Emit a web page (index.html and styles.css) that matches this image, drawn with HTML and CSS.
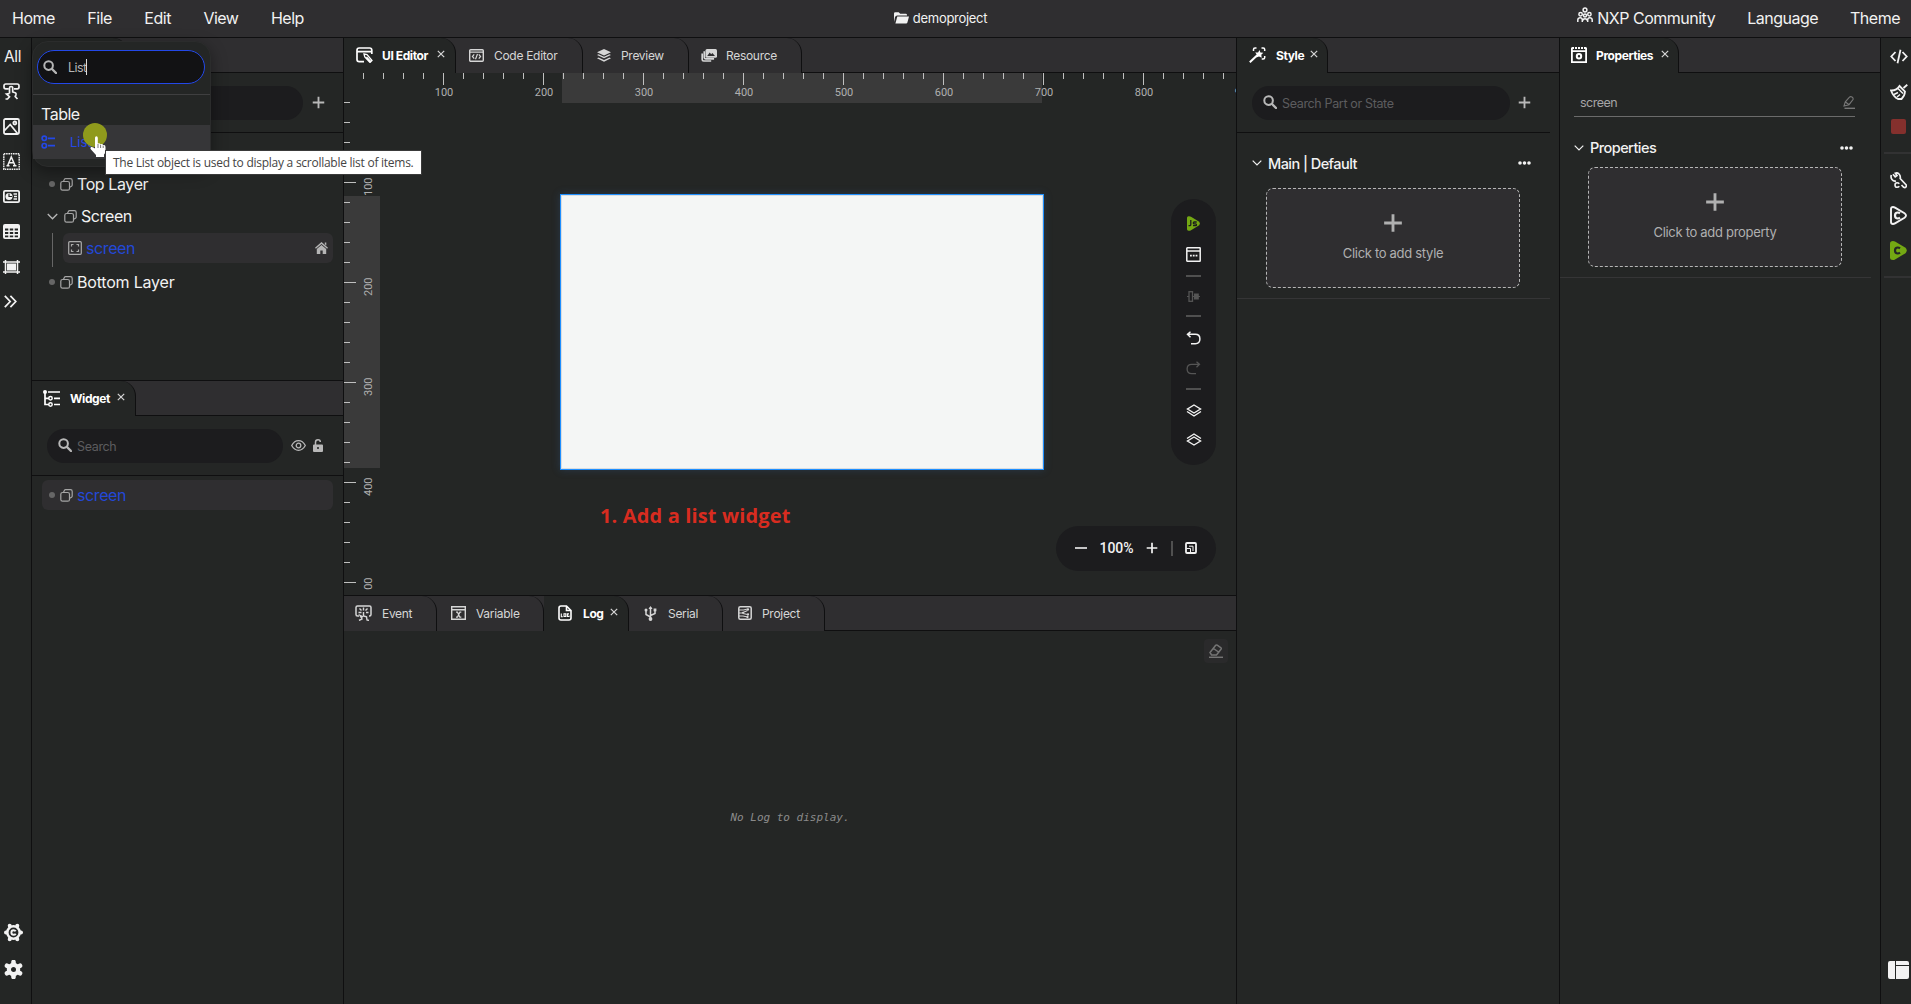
FILE: index.html
```html
<!DOCTYPE html>
<html lang="en">
<head>
    <meta charset="UTF-8">
    <meta name="viewport" content="width=device-width, initial-scale=1.0">
    <title>demoproject</title>
    <link rel="stylesheet" href="styles.css">
</head>
<body>
    <!-- Shared icons -->
    <svg class="sprite">
        <symbol id="search" viewBox="0 0 14 14"><circle cx="5.6" cy="5.6" r="4.3" fill="none" stroke="currentColor" stroke-width="2"/><path d="M9 9l4 4" stroke="currentColor" stroke-width="2.4" stroke-linecap="round"/></symbol>
        <symbol id="plus" viewBox="0 0 14 14"><path d="M7 .8v12.4M.8 7h12.4" stroke="currentColor" stroke-width="2"/></symbol>
        <symbol id="close" viewBox="0 0 8 8"><path d="M.8 .8l6.4 6.4M7.2 .8L.8 7.2" stroke="currentColor" stroke-width="1.2"/></symbol>
        <symbol id="chevron" viewBox="0 0 10 6"><path d="M.7 .7L5 5 9.3 .7" fill="none" stroke="currentColor" stroke-width="1.2"/></symbol>
        <symbol id="dots" viewBox="0 0 13 4"><path d="M2 2h.01M6.5 2h.01M11 2h.01" stroke="currentColor" stroke-width="3.6" stroke-linecap="round"/></symbol>
        <symbol id="layer" viewBox="0 0 13 13"><g fill="none" stroke="currentColor" stroke-width="1.2"><rect x=".8" y="3.5" width="8.7" height="8.7" rx="1.8"/><path d="M3.5 3.3l1-2q.3-.6 1-.6h5q1.7 0 1.7 1.7v4.6q0 .8-.7 1.200l-1.800 1"/></g></symbol>
    </svg>

    <div class="menubar">
        <div class="menu">
            <span>Home</span>
            <span>File</span>
            <span>Edit</span>
            <span>View</span>
            <span>Help</span>
        </div>
        <div class="project-name">
            <svg width="15" height="12" viewBox="0 0 15 12"><path d="M0 10V1.500Q0 .2 1.300 .2h3.400l1.500 1.500h5.500q1.300 0 1.300 1.300v.6H3.200Q1.500 3.600 1 5.200zM3.300 4.600H15l-1.600 5.900q-.3 1-1.300 1H1.400z" fill="currentColor"/></svg>
            <span>demoproject</span>
        </div>
        <div class="menu menu-right">
            <span class="community">
                <svg width="16" height="17" viewBox="0 0 16 17"><g fill="none" stroke="currentColor" stroke-width="1.500"><circle cx="8" cy="3" r="1.900"/><circle cx="3.600" cy="7.200" r="1.700"/><circle cx="12.400" cy="7.200" r="1.700"/><circle cx="8" cy="8.600" r="1.500"/><path d="M.8 15v-2.200Q1 10.800 3.300 10.800q1.800 0 2 2V15M10.700 15v-2.200q.2-2 2-2 2.300 0 2.500 2V15M5.500 14q.3-2.200 2.500-2.200t2.500 2.200"/></g></svg>
                NXP Community
            </span>
            <span>Language</span>
            <span>Theme</span>
        </div>
    </div>

    <div class="workspace">
        <!-- Widget categories -->
        <div class="rail rail-left">
            <div class="rail-item all">All</div>
            <div class="rail-item"><svg width="17" height="17" viewBox="0 0 17 17"><path d="M5.500 5.800H2.800Q1 5.800 1 4V2.800Q1 1 2.800 1h11.400Q16 1 16 2.800V4q0 1.800-1.800 1.800H11M6.500 10.500V5q0-1.500 1.600-1.500T9.700 5v4l2.500.8q1.200.5.800 1.800l-.8 2 2.300 2.400M6.500 10.500l-3 .5 3 2.700L4.500 16H2.500" fill="none" stroke="currentColor" stroke-width="1.700"/></svg></div>
            <div class="rail-item"><svg width="17" height="17" viewBox="0 0 17 17"><g fill="none" stroke="currentColor" stroke-width="1.800"><rect x="1" y="1" width="15" height="15" rx="1.500"/><circle cx="11.800" cy="5" r="1.500"/><path d="M1.500 12.500L7.200 6.500l7.300 9"/></g></svg></div>
            <div class="rail-item"><svg width="17" height="17" viewBox="0 0 17 17"><rect x=".8" y=".8" width="15.400" height="15.400" fill="none" stroke="currentColor" stroke-width="1.400" stroke-dasharray="1.600 .7"/><path d="M4.700 12.500L8.300 4l3.700 8.500M6 9.800h5M3.500 12.700h3M10 12.700h3.500" fill="none" stroke="currentColor" stroke-width="1.500"/></svg></div>
            <div class="rail-item"><svg width="17" height="13" viewBox="0 0 17 13"><rect x=".9" y=".9" width="15.200" height="11.200" rx="1.200" fill="none" stroke="currentColor" stroke-width="1.800"/><circle cx="6" cy="6.500" r="3.500" fill="currentColor"/><path d="M6 3.500v3h3" fill="none" stroke="#242625" stroke-width="1.200"/><path d="M10.500 4h3.500M11 6.500h3M10.500 9h3.500" stroke="currentColor" stroke-width="1.400"/></svg></div>
            <div class="rail-item"><svg width="17" height="15" viewBox="0 0 17 15"><rect width="17" height="15" rx="2" fill="currentColor"/><path d="M2 4.500h3.300v2H2zM6.800 4.500h3.400v2H6.800zM11.700 4.500H15v2h-3.300zM2 8h3.300v2H2zM6.800 8h3.400v2H6.800zM11.700 8H15v2h-3.300zM2 11.400h3.300v1.800H2zM6.800 11.400h3.400v1.800H6.800zM11.700 11.400H15v1.800h-3.300z" fill="#242625"/></svg></div>
            <div class="rail-item"><svg width="17" height="14" viewBox="0 0 17 14"><rect x="4" y="3.500" width="9" height="7" fill="currentColor"/><path d="M0 2h17M0 12h17M2.500 0v14M14.500 0v14" stroke="currentColor" stroke-width="1.500"/></svg></div>
            <div class="rail-item more"><svg width="13" height="13" viewBox="0 0 13 13"><path d="M.8 .8l5.400 5.700-5.400 5.700M6.400 .8l5.400 5.700-5.400 5.700" fill="none" stroke="currentColor" stroke-width="1.700"/></svg></div>
            <div class="rail-bottom">
                <svg width="19" height="19" viewBox="0 0 19 19"><circle cx="9.500" cy="9.500" r="6.200" fill="none" stroke="currentColor" stroke-width="2.600"/><path d="M5.700 2.700h.01M13.300 2.700h.01M2 9.500h.01M17 9.500h.01M5.700 16.300h.01M13.300 16.300h.01" stroke="currentColor" stroke-width="4" stroke-linecap="round"/><path d="M11.700 8.300Q11 7.200 9.600 7.200q-2.200 0-2.200 2.300t2.200 2.300q1.400 0 2.100-1.100" fill="none" stroke="currentColor" stroke-width="1.900"/></svg>
                <svg width="19" height="19" viewBox="0 0 19 19"><circle cx="9.500" cy="9.500" r="4.600" fill="none" stroke="currentColor" stroke-width="4.200"/><path d="M9.500 2v2M9.500 15v2M3 5.750l1.700 1M14.300 12.250l1.700 1M3 13.250l1.700-1M14.300 6.750l1.700-1" stroke="currentColor" stroke-width="4.600" stroke-linecap="round"/></svg>
            </div>
        </div>

        <!-- Screen tree and widget tree -->
        <div class="left-panel">
            <div class="screens">
                <div class="tabs"><div class="tab active tab-screens"></div><div class="tabs-rest"></div></div>
                <div class="search-row">
                    <div class="search-box"></div>
                    <svg class="icon add" width="13" height="13"><use href="#plus"/></svg>
                </div>
                <div class="tree">
                    <div class="node"><i class="bullet"></i><svg class="icon" width="13" height="13"><use href="#layer"/></svg>Top Layer</div>
                    <div class="node node-open"><svg class="arrow" width="11" height="7"><use href="#chevron"/></svg><svg class="icon" width="13" height="13"><use href="#layer"/></svg>Screen</div>
                    <div class="children">
                        <div class="node selected">
                            <svg width="14" height="14" viewBox="0 0 14 14"><rect x=".7" y=".7" width="12.600" height="12.600" rx="1" fill="none" stroke="#aaa" stroke-width="1.200"/><path d="M3.500 5.500v-2h2M8.500 3.500h2v2M10.500 8.500v2h-2M5.500 10.500h-2v-2" fill="none" stroke="#aaa" stroke-width="1.200"/></svg>
                            screen
                            <svg class="home" width="13" height="12" viewBox="0 0 13 12"><path d="M6.500 0L13 5.800l-.9 1L6.500 1.900 .9 6.800 0 5.800zM6.500 3l4.700 4.100V12H7.700V8.500H5.300V12H1.800V7.100zM9.800 .6h1.500v3l-1.500-1.400z" fill="#b5b5b5"/></svg>
                        </div>
                    </div>
                    <div class="node"><i class="bullet"></i><svg class="icon" width="13" height="13"><use href="#layer"/></svg><span class="wide">Bottom Layer</span></div>
                </div>
            </div>

            <div class="widgets">
                <div class="tabs">
                    <div class="tab active tab-widget">
                        <svg width="17" height="17" viewBox="0 0 17 17"><path d="M2 3v11.500h4M2 8.300h4M5 2h12M11 8.300h6M11 14.500h6" fill="none" stroke="currentColor" stroke-width="1.700"/><circle cx="2" cy="2" r="2" fill="currentColor"/><circle cx="7.500" cy="8.300" r="1.700" fill="none" stroke="currentColor" stroke-width="1.500"/><circle cx="7.500" cy="14.500" r="1.700" fill="none" stroke="currentColor" stroke-width="1.500"/></svg>
                        <span>Widget</span>
                        <svg class="close" width="8" height="8"><use href="#close"/></svg>
                    </div>
                    <div class="tabs-rest"></div>
                </div>
                <div class="search-row">
                    <div class="search-box search-widget"><svg width="14" height="14"><use href="#search"/></svg>Search</div>
                    <svg class="icon" width="15" height="11" viewBox="0 0 15 11"><path d="M.7 5.500Q3.300 .7 7.500 .7t6.800 4.800q-2.600 4.800-6.800 4.800T.7 5.500z" fill="none" stroke="currentColor" stroke-width="1.300"/><circle cx="7.500" cy="5.500" r="2.300" fill="none" stroke="currentColor" stroke-width="1.300"/></svg>
                    <svg class="icon lock" width="10" height="13" viewBox="0 0 10 13"><path d="M2.500 6V3.300Q2.500 .8 5 .8q2.300 0 2.300 2.200" fill="none" stroke="currentColor" stroke-width="1.500"/><path d="M1 5.500h8q1 0 1 1V12q0 1-1 1H1q-1 0-1-1V6.500q0-1 1-1zM4.200 8v2h1.600V8z" fill="currentColor"/></svg>
                </div>
                <div class="tree">
                    <div class="node selected"><i class="bullet"></i><svg class="icon" width="13" height="13"><use href="#layer"/></svg>screen</div>
                </div>
            </div>
        </div>

        <!-- Editor and log -->
        <div class="center">
            <div class="tabs">
                <div class="tab active tab-ui">
                    <svg width="17" height="16" viewBox="0 0 17 16"><path d="M15.800 7V3.200Q15.800 1 13.600 1H3.200Q1 1 1 3.200v9.300q0 2.200 2.200 2.200H8M1 4.600h14.800" fill="none" stroke="currentColor" stroke-width="1.700"/><path d="M8 7l3 .5 5 6-2 2-5.200-5.500zM10.500 10l4 4.300" fill="none" stroke="currentColor" stroke-width="1.300"/></svg>
                    <span>UI Editor</span>
                    <svg class="close" width="8" height="8"><use href="#close"/></svg>
                </div>
                <div class="tab tab-code">
                    <svg width="15" height="13" viewBox="0 0 15 13"><rect x=".7" y=".7" width="13.600" height="11.600" rx="1" fill="none" stroke="currentColor" stroke-width="1.400"/><path d="M.7 3.200h13.600M5.200 5.300L3.400 7.500l1.800 2.200M9.800 5.300l1.800 2.200-1.800 2.200M8.500 5L6.500 10.200" fill="none" stroke="currentColor" stroke-width="1.200"/></svg>
                    <span>Code Editor</span>
                </div>
                <div class="tab tab-preview">
                    <svg width="14" height="13" viewBox="0 0 14 13"><path d="M7 0l7 3.200-7 3.200-7-3.200zM1.500 5.300L7 7.700l5.500-2.400L14 6 7 9.200 0 6zM1.500 8.500L7 11l5.500-2.500 1.500.7L7 12.700 0 9.200z" fill="currentColor"/></svg>
                    <span>Preview</span>
                </div>
                <div class="tab tab-resource">
                    <svg width="16" height="13" viewBox="0 0 16 13"><path d="M6 0h8.500Q16 0 16 1.500v5.700q0 1.500-1.500 1.500H6q-1.500 0-1.500-1.500V1.500Q4.500 0 6 0z" fill="currentColor"/><path d="M6.200 7l2.500-3.500 1.500 1.800 1.200-1.200L14 7z" fill="#2f2e30"/><path d="M3.300 2.300v6.200q0 1.300 1.300 1.300h8.500M1.200 4.500v6q0 1.500 1.500 1.500h7.500" fill="none" stroke="currentColor" stroke-width="1.700"/></svg>
                    <span>Resource</span>
                </div>
                <div class="tabs-rest"></div>
            </div>

            <div class="stage">
                <div class="ruler-x">
                    <span>100</span><span>200</span><span>300</span><span>400</span><span>500</span><span>600</span><span>700</span><span>800</span><span>900</span>
                </div>
                <div class="ruler-y">
                    <span>100</span><span>200</span><span>300</span><span>400</span><span>500</span>
                </div>
                <div class="screen"></div>
                <div class="note">1. Add a list widget</div>

                <div class="tools">
                    <svg width="15" height="15" viewBox="0 0 15 15"><path d="M1 1.800Q1 .4 2.500 .2 4 0 5 .8l8.200 5Q14.700 7.500 13.200 9.200L5 14.200q-1 .8-2.500.6Q1 14.600 1 13.200z" fill="#74a813"/><path d="M4.800 4v4.400q0 1.200-1 1.200H2.500M10.700 6H8.300q-1 0-1 .9t1 .9h1.200q1 0 1 .9t-1 .9H7" fill="none" stroke="#1c1c1e" stroke-width="1.300"/></svg>
                    <svg width="15" height="15" viewBox="0 0 15 15"><rect x=".8" y=".8" width="13.400" height="13.400" rx=".5" fill="none" stroke="currentColor" stroke-width="1.500"/><path d="M1 4h13" stroke="currentColor" stroke-width="1.500"/><path d="M4 8.700h8" stroke="currentColor" stroke-width="1.700" stroke-dasharray="1.800 1"/></svg>
                    <i></i>
                    <svg class="off" width="13" height="11" viewBox="0 0 13 11"><path d="M0 5.500h2M5.500 5.500H13" stroke="currentColor"/><rect x="2" y=".7" width="3.500" height="9.600" fill="none" stroke="currentColor" stroke-width="1.300"/><rect x="7" y="2.500" width="4.800" height="6" fill="currentColor"/></svg>
                    <i></i>
                    <svg width="15" height="14" viewBox="0 0 15 14"><path d="M4.500 .7L1.500 3.300l3 2.900M1.500 3.300H9.300q4.600 0 4.600 4.700T9.300 12.700H5" fill="none" stroke="currentColor" stroke-width="1.500"/></svg>
                    <svg class="off" width="15" height="14" viewBox="0 0 15 14"><path d="M10.500 .7l3 2.600-3 2.900M13.500 3.300H5.700Q1.100 3.300 1.100 8t4.600 4.700H10" fill="none" stroke="currentColor" stroke-width="1.300"/></svg>
                    <i></i>
                    <svg width="16" height="13" viewBox="0 0 16 13"><path d="M8 1l6.500 4L8 9 1.500 5zM1 7.500L8 12l7-4.500" fill="none" stroke="currentColor" stroke-width="1.400"/></svg>
                    <svg width="16" height="13" viewBox="0 0 16 13"><path d="M8 4l6.500 4L8 12 1.500 8zM1 5.500L8 1l7 4.500" fill="none" stroke="currentColor" stroke-width="1.400"/></svg>
                </div>

                <div class="zoom">
                    <svg width="12" height="12" viewBox="0 0 12 12"><path d="M0 6h12" stroke="currentColor" stroke-width="1.600"/></svg>
                    <span>100%</span>
                    <svg width="12" height="12"><use href="#plus"/></svg>
                    <i></i>
                    <svg width="12" height="12" viewBox="0 0 12 12"><rect x="1" y="1" width="10" height="10" rx="1" fill="none" stroke="currentColor" stroke-width="1.800"/><path d="M4 4.200h4V9M1.500 6.500h4v4" fill="none" stroke="currentColor"/></svg>
                </div>
            </div>

            <div class="log">
                <div class="tabs">
                    <div class="tab tab-event">
                        <svg width="17" height="16" viewBox="0 0 17 16"><path d="M4 11H2.500Q1 11 1 9.500v-7Q1 1 2.500 1h12Q16 1 16 2.500v7q0 1.500-1.500 1.500H14" fill="none" stroke="currentColor" stroke-width="1.500"/><path d="M8.500 2.500v3M4.500 3.500l2 2M12.500 3.500l-2 2M3.500 7.500h3M13.500 7.500H11M8.500 7v4l3 .8.5 3.200 2 .5M8 12l-3-1.500 2 3.500-3 1.500" fill="none" stroke="currentColor" stroke-width="1.400"/></svg>
                        <span>Event</span>
                    </div>
                    <div class="tab tab-variable">
                        <svg width="15" height="14" viewBox="0 0 15 14"><path d="M.7 .7h13.600v12.600H.7zM.7 3.700h13.600" fill="none" stroke="currentColor" stroke-width="1.400"/><path d="M5 6.200h1.500l2.300 5h1.500M10.300 6.200H8.900l-2.500 5H5" fill="none" stroke="currentColor" stroke-width="1.200"/></svg>
                        <span>Variable</span>
                    </div>
                    <div class="tab active tab-log">
                        <svg width="14" height="16" viewBox="0 0 14 16"><path d="M1 13V3q0-2 2-2h5.500L13 5.500V13q0 2-2 2H3q-2 0-2-2zM8.500 1v4.500H13" fill="none" stroke="currentColor" stroke-width="1.600"/><path d="M3.300 8.500v3.200h1.500M6 8.800h1.800v2.700H6zM11 8.900H9.400v2.600H11v-1" fill="none" stroke="currentColor" stroke-width="1.100"/></svg>
                        <span>Log</span>
                        <svg class="close" width="8" height="8"><use href="#close"/></svg>
                    </div>
                    <div class="tab tab-serial">
                        <svg width="13" height="15" viewBox="0 0 13 15"><path d="M6.500 1v12M6.500 11L2 8.500V4.500M6.500 9.500L11 7.500V4" fill="none" stroke="currentColor" stroke-width="1.500"/><path d="M4.500 3l2-3 2 3z" fill="currentColor"/><circle cx="6.500" cy="13" r="1.900" fill="currentColor"/><circle cx="2" cy="4" r="1.500" fill="currentColor"/><path d="M9.600 2.500h2.800v2.800H9.600z" fill="currentColor"/></svg>
                        <span>Serial</span>
                    </div>
                    <div class="tab tab-project">
                        <svg width="14" height="14" viewBox="0 0 14 14"><rect x=".8" y=".8" width="12.400" height="12.400" rx="1.500" fill="none" stroke="currentColor" stroke-width="1.500"/><path d="M1 4h4.500L9.500 3M1 7h3l5.500-2.500M1 10h4l4.500 1M5 7.500l4.500 1" fill="none" stroke="currentColor" stroke-width="1.200"/><path d="M10 3.500h.01M10 8.500h.01M5 6.800h.01M9.500 11h.01" stroke="currentColor" stroke-width="2.300" stroke-linecap="round"/></svg>
                        <span>Project</span>
                    </div>
                    <div class="tabs-rest"></div>
                </div>
                <div class="log-body">
                    <div class="clear"><svg width="14" height="14" viewBox="0 0 14 14"><path d="M0 13.300h14" stroke="currentColor" stroke-width="1.500"/><path d="M4.500 11H2.500L1 8.500l5.500-7Q7.200 .6 8.200 1.200l3.500 2.300q1 .7.300 1.700L7.500 11zM4.500 4.500l5 3.500" fill="none" stroke="currentColor" stroke-width="1.500"/></svg></div>
                    <p>No Log to display.</p>
                </div>
            </div>
        </div>

        <!-- Style -->
        <div class="side style-panel">
            <div class="tabs">
                <div class="tab active tab-style">
                    <svg width="17" height="16" viewBox="0 0 17 16"><path d="M.8 15.300L9 7.500" stroke="currentColor" stroke-width="2"/><path d="M10.500 3l.9 2.500 2.900.2-2 2 .4 3-2.700-1.200-2.800 1 .8-2.800-1.800-2.200 2.900-.1z" fill="currentColor"/><path d="M4.500 4V2.500Q4.500 1 6 1h1.500M12.500 1h1.700q1.500 0 1.500 1.500V4M15.700 9v1.500q0 1.500-1.500 1.500h-1.500" fill="none" stroke="currentColor" stroke-width="1.500"/></svg>
                    <span>Style</span>
                    <svg class="close" width="8" height="8"><use href="#close"/></svg>
                </div>
                <div class="tabs-rest"></div>
            </div>
            <div class="side-content">
                <div class="search-row">
                    <div class="search-box search-style"><svg width="14" height="14"><use href="#search"/></svg>Search Part or State</div>
                    <svg class="icon" width="13" height="13"><use href="#plus"/></svg>
                </div>
                <div class="section">
                    <div class="section-title">
                        <svg width="10" height="6"><use href="#chevron"/></svg>
                        <h2>Main | Default</h2>
                        <svg class="dots" width="13" height="4"><use href="#dots"/></svg>
                    </div>
                    <div class="add-box">
                        <svg width="20" height="20"><use href="#plus"/></svg>
                        <p>Click to add style</p>
                    </div>
                </div>
            </div>
        </div>

        <!-- Properties -->
        <div class="side prop-panel">
            <div class="tabs">
                <div class="tab active tab-prop">
                    <svg width="16" height="16" viewBox="0 0 16 16"><path d="M.9 .5v14.600h14.200V.5M1 4.200h14" fill="none" stroke="currentColor" stroke-width="1.800"/><path d="M1 1h14" stroke="currentColor" stroke-width="1.800" stroke-dasharray="2 1"/><circle cx="8" cy="9.300" r="2.200" fill="none" stroke="currentColor" stroke-width="2"/></svg>
                    <span>Properties</span>
                    <svg class="close" width="8" height="8"><use href="#close"/></svg>
                </div>
                <div class="tabs-rest"></div>
            </div>
            <div class="side-content">
                <div class="name-row">
                    <span>screen</span>
                    <svg width="12" height="13" viewBox="0 0 12 13"><path d="M1.500 12.300H12" stroke="currentColor" stroke-width="1.400"/><path d="M1 10l1.300-4.200L6.500 1.200q1-1 2.500-.2t1 2.500L6 8.700zM2.500 6l3.300 2.500" fill="none" stroke="currentColor" stroke-width="1.100"/></svg>
                </div>
                <div class="section">
                    <div class="section-title">
                        <svg width="10" height="6"><use href="#chevron"/></svg>
                        <h2>Properties</h2>
                        <svg class="dots" width="13" height="4"><use href="#dots"/></svg>
                    </div>
                    <div class="add-box">
                        <svg width="20" height="20"><use href="#plus"/></svg>
                        <p>Click to add property</p>
                    </div>
                </div>
            </div>
        </div>

        <!-- Run and build -->
        <div class="rail rail-right">
            <div class="rail-item"><svg width="18" height="15" viewBox="0 0 18 15"><path d="M5.500 3L1.300 7.500l4.200 4.500M12.500 3l4.200 4.500-4.200 4.500M10.500 .8L7.500 14.200" fill="none" stroke="currentColor" stroke-width="1.800"/></svg></div>
            <div class="rail-item"><svg width="18" height="16" viewBox="0 0 18 16"><path d="M17.300 .7L13.500 4M9.500 2l5.500 5.500q-.3 4.500-3.500 7.500H8Q3.500 13 1 6.500q5.500.3 8.500-4.500z" fill="none" stroke="currentColor" stroke-width="1.800"/><path d="M4 10.500l4-2M7 13l3-2.500M8 4.500l5 5" stroke="currentColor" stroke-width="1.500"/></svg></div>
            <div class="rail-item stop"><i></i></div>
            <hr>
            <div class="rail-item"><svg width="17" height="17" viewBox="0 0 17 17"><path d="M3 2.200l2.200 2.600L7 3.500 5.300 1.200Q7.300 .3 9 2t1.200 4.500l6 6.500q.6 1-.3 2t-2.200.3L11.500 13M6 9Q3.500 9.500 2 7.500T1.300 3" fill="none" stroke="currentColor" stroke-width="1.700"/><path d="M9.300 11.700Q8.500 10.700 7 10.700q-2 0-2 2.300t2 2.300q1.500 0 2.300-1" fill="none" stroke="currentColor" stroke-width="1.600"/></svg></div>
            <div class="rail-item"><svg width="17" height="19" viewBox="0 0 17 19"><path d="M1 3Q1 1 3 1q1 0 2 .6l9.500 5.700q3 2.200 0 4.400L5 17.400q-1 .6-2 .6-2 0-2-2z" fill="none" stroke="currentColor" stroke-width="1.900"/><path d="M10 7.300Q9 6.500 7.800 6.500 5 6.500 5 9.500t2.800 3q1.200 0 2.200-.8" fill="none" stroke="currentColor" stroke-width="2.200"/></svg></div>
            <div class="rail-item"><svg width="17" height="19" viewBox="0 0 17 19"><path d="M0 2.500Q0 0 3 0q1 0 2 .5l10.500 6.300q2.500 2.700 0 5.400L5 18.500q-1 .5-2 .5-3 0-3-2.500z" fill="#74a813"/><path d="M10 7.300Q9 6.500 7.800 6.500 5 6.500 5 9.500t2.800 3q1.200 0 2.200-.8" fill="none" stroke="#242625" stroke-width="2.200"/></svg></div>
            <hr>
            <div class="rail-bottom">
                <svg width="21" height="18" viewBox="0 0 21 18"><path d="M2 0h5v18H2q-2 0-2-2V2Q0 0 2 0zM8 0h11q2 0 2 2v2H8zM8 5h13v11q0 2-2 2H8z" fill="currentColor"/></svg>
            </div>
        </div>
    </div>

    <!-- Widget search popup -->
    <div class="popup">
        <div class="popup-search"><svg width="14" height="14"><use href="#search"/></svg>List<i class="caret"></i></div>
        <div class="popup-group">Table</div>
        <div class="popup-item">
            <svg width="14" height="14" viewBox="0 0 14 14"><g fill="none" stroke="currentColor" stroke-width="1.700"><circle cx="3.300" cy="3.300" r="2.200"/><circle cx="3.300" cy="10.700" r="2.200"/><path d="M7 3.300h7M7 10.700h7"/></g></svg>
            List
        </div>
    </div>
    <div class="click-spot"></div>
    <svg class="cursor" width="18" height="22" viewBox="0 0 18 22"><path d="M5 12.500V2Q5 .3 6.400 .3T7.800 2v5.500q2-.7 2.700.8 2-.7 2.700.8Q15.500 8.500 15.500 11v4q0 2-1.500 3.500V21H6v-2L1 13.500Q-.3 11.500 1.300 11 3 10.700 5 12.500z" fill="#fff"/><path d="M8 8v4M10.600 8.800V12M13.200 9.600V12" stroke="#555" stroke-width=".8"/></svg>
    <div class="tooltip">The List object is used to display a scrollable list of items.</div>
</body>
</html>
```
FILE: styles.css
```css
* {
    box-sizing: border-box;
}
body {
    margin: 0;
    height: 1004px;
    display: flex;
    flex-direction: column;
    overflow: hidden;
    background-color: #242625;
    color: #f2f2f2;
    font-family: Inter, "Liberation Sans", sans-serif;
    font-size: 13px;
}
svg {
    display: block;
    flex: none;
}
.sprite {
    position: absolute;
    width: 0;
    height: 0;
}

/* Menu bar */
.menubar {
    display: grid;
    grid-template-columns: 1fr auto 1fr;
    align-items: center;
    height: 38px;
    flex: none;
    padding-bottom: 1px;
    background-color: #2f2e30;
    border-bottom: 1px solid #0f0f10;
}
.menu {
    display: flex;
    gap: 32.5px;
    padding: 0 12px;
    font-size: 16px;
    letter-spacing: -0.5px;
}
.menu-right {
    justify-content: flex-end;
    gap: 32px;
    padding-right: 11px;
}
.community {
    display: flex;
    align-items: center;
    gap: 4px;
}
.community svg {
    margin-top: -5px;
}
.project-name {
    display: flex;
    align-items: center;
    gap: 4px;
    margin-left: -30px;
    letter-spacing: -0.3px;
}

/* Columns */
.workspace {
    display: flex;
    flex: 1;
    min-height: 0;
}
.left-panel {
    width: 312px;
    border-right: 1px solid #0f0f10;
}
.center {
    width: 892px;
    display: flex;
    flex-direction: column;
}
.side {
    border-left: 1px solid #0f0f10;
}
.style-panel {
    width: 323px;
}
.prop-panel {
    width: 321px;
}

/* Side rails */
.rail {
    display: flex;
    flex-direction: column;
    flex: none;
}
.rail-left {
    width: 32px;
    padding: 1px 0 0 3px;
    border-right: 1px solid #0f0f10;
}
.rail-right {
    width: 31px;
    padding-left: 9px;
    border-left: 1px solid #0f0f10;
    padding-top: 1px;
}
.rail-item {
    display: flex;
    align-items: center;
    height: 35px;
}
.all {
    padding-left: 1px;
    font-size: 15.5px;
    letter-spacing: -0.4px;
}
.more {
    padding-left: 1px;
}
.stop i {
    width: 15px;
    height: 15px;
    margin-left: 1px;
    border-radius: 2px;
    background-color: #84302d;
}
.rail hr {
    width: 27px;
    height: 2px;
    margin: 8px 0 9px -6px;
    border: 0;
    flex: none;
    background-color: #323233;
}
.rail-bottom {
    display: flex;
    flex-direction: column;
    gap: 18px;
    margin-top: auto;
    padding: 0 0 25px 1px;
}
.rail-right .rail-bottom {
    margin-left: -3px;
}

/* Tabs */
.tabs {
    display: flex;
    height: 35px;
    flex: none;
    background-color: #2f2e30;
}
.tab {
    display: flex;
    align-items: center;
    padding: 0 0 1px 12px;
    gap: 10px;
    flex: none;
    color: #d6d6d6;
    font-size: 12px;
    letter-spacing: -0.3px;
    background-color: #2f2e30;
    border-right: 1px solid #0f0f10;
    border-top-right-radius: 15px;
}
.tab.active {
    color: #fff;
    font-weight: 700;
    letter-spacing: -0.4px;
    background-color: #242625;
}
.tab .close {
    margin-left: -3px;
    margin-top: -2px;
    color: #d6d6d6;
}
.tabs-rest {
    flex: 1;
    border-bottom: 1px solid #0f0f10;
}
.tab-screens { width: 96px; }
.tab-widget { width: 104px; padding-left: 11px; }
.tab-ui { width: 112px; gap: 9px; }
.tab-ui .close { margin-left: 0; }
.tab-code { width: 127px; padding-left: 13px; }
.tab-preview { width: 106px; padding-left: 14px; }
.tab-resource { width: 113px; gap: 9px; }
.tab-event { width: 93px; padding-left: 11px; }
.tab-variable { width: 107px; padding-left: 14px; }
.tab-log { width: 85px; padding-left: 14px; gap: 11px; }
.tab-log .close { margin-left: -5px; }
.tab-serial { width: 94px; padding-left: 15px; gap: 11px; }
.tab-project { width: 102px; padding-left: 15px; }
.tab-style { width: 91px; }
.tab-style .close { margin-left: -4px; }
.tab-prop { width: 119px; padding-left: 11px; gap: 9px; }
.tab-prop .close { margin-left: -1px; }

/* Search rows */
.search-row {
    display: flex;
    align-items: center;
    height: 60px;
    padding: 0 0 0 15px;
    gap: 8px;
    border-bottom: 1px solid #0f0f10;
}
.search-box {
    display: flex;
    align-items: center;
    gap: 5px;
    width: 256px;
    height: 34px;
    margin-top: 1px;
    padding: 1px 11px 0;
    border-radius: 17px;
    background-color: #1c1c1e;
    color: #5c5c5e;
    font-size: 12.5px;
    letter-spacing: -0.35px;
}
.search-box svg {
    margin-top: -3px;
}
.search-box svg,
.icon {
    color: #b8b8b8;
}
.add {
    margin-left: 1px;
}
.search-widget {
    width: 236px;
}
.search-style {
    width: 258px;
}
.lock {
    margin: -1px 0 0 -1px;
}

/* Trees */
.screens {
    height: 342px;
}
.screens .tree {
    padding-top: 36px;
}
.tree {
    padding: 4px 10px;
}
.node {
    display: flex;
    align-items: center;
    height: 30px;
    padding-left: 7px;
    gap: 4px;
    font-size: 16px;
    letter-spacing: -0.4px;
}
.node .icon {
    color: #a5a5a5;
}
.wide {
    letter-spacing: -0.2px;
}
.bullet {
    width: 6px;
    height: 6px;
    margin-right: 1px;
    border-radius: 50%;
    background-color: #666;
}
.node-open {
    height: 34px;
    padding-left: 5px;
}
.arrow {
    margin-right: 2px;
    color: #b8b8b8;
}
.selected {
    border-radius: 6px;
    background-color: #2f2e30;
    color: #2348d8;
}
.children {
    margin-left: 10px;
    padding-left: 10px;
    border-left: 1px solid #666;
    height: 34px;
}
.children .node {
    padding-left: 5px;
}
.home {
    margin: 0 5px 0 auto;
}
.widgets {
    border-top: 1px solid #0f0f10;
}

/* Stage */
.stage {
    position: relative;
    height: 522px;
    flex: none;
    overflow: hidden;
}
.ruler-x,
.ruler-y {
    display: flex;
    overflow: hidden;
    color: #b0b0b0;
    font-size: 11px;
    font-family: Roboto, sans-serif;
    text-align: center;
}
.ruler-x {
    height: 30px;
    padding-left: 50px;
    background:
        repeating-linear-gradient(to right, #c0c0c0 0 1px, transparent 1px 100px) -1px 0 / 1000px 12px no-repeat,
        repeating-linear-gradient(to right, #c0c0c0 0 1px, transparent 1px 20px) -1px 0 / 1000px 6px no-repeat,
        linear-gradient(#3a3a3a, #3a3a3a) 218px 0 / 480px 30px no-repeat;
}
.ruler-x span {
    width: 100px;
    flex: none;
    padding-top: 13px;
}
.ruler-y {
    flex-direction: column;
    width: 36px;
    height: 488px;
    margin-top: -1px;
    padding: 35px 0 0 18px;
    background:
        repeating-linear-gradient(to bottom, #c0c0c0 0 1px, transparent 1px 100px) 0 80px / 12px 500px no-repeat,
        repeating-linear-gradient(to bottom, #c0c0c0 0 1px, transparent 1px 20px) 0 0 / 6px 600px no-repeat,
        linear-gradient(#3a3a3a, #3a3a3a) 0 94px / 36px 272px no-repeat;
}
.ruler-y span {
    height: 100px;
    flex: none;
    writing-mode: vertical-rl;
    transform: rotate(180deg);
}
.screen {
    position: absolute;
    left: 216px;
    top: 121px;
    width: 484px;
    height: 276px;
    border: 1px solid #1e8fff;
    background-color: #f4f6f5;
    box-shadow: inset 0 0 0 1px #d9dde0, 0 0 8px rgba(50, 100, 160, 0.3);
}
.note {
    position: absolute;
    left: 256px;
    top: 429px;
    color: #d82c20;
    font: bold 20px "Open Sans", sans-serif;
    letter-spacing: 0.15px;
    white-space: nowrap;
}
.tools {
    position: absolute;
    left: 827px;
    top: 126px;
    width: 45px;
    height: 266px;
    padding-top: 17px;
    display: flex;
    flex-direction: column;
    align-items: center;
    gap: 13px;
    border-radius: 23px;
    background-color: #1c1c1e;
}
.tools svg + svg {
    margin-top: 3px;
}
.tools i {
    width: 15px;
    height: 2px;
    margin-bottom: 1px;
    background-color: #505050;
}
.off {
    color: #555;
}
.zoom {
    position: absolute;
    left: 712px;
    top: 453px;
    width: 160px;
    height: 45px;
    padding: 0 19px 1px 19px;
    display: flex;
    align-items: center;
    justify-content: space-between;
    border-radius: 23px;
    background-color: #1c1c1e;
    font: 500 14px Roboto, sans-serif;
}
.zoom i {
    width: 2px;
    height: 15px;
    background-color: #505050;
}

/* Log */
.log {
    display: flex;
    flex: 1;
    flex-direction: column;
    border-top: 1px solid #0f0f10;
}
.log-body {
    display: flex;
    flex: 1;
    flex-direction: column;
    align-items: center;
    padding: 8px;
}
.clear {
    display: flex;
    align-items: center;
    justify-content: center;
    align-self: flex-end;
    width: 24px;
    height: 24px;
    border-radius: 4px;
    background-color: #2a2a2b;
    color: #757575;
}
.log-body p {
    margin: 148px 0 0;
    color: #8a8a8a;
    font: italic 11px "DejaVu Sans Mono", monospace;
}

/* Style and properties */
.side-content {
    width: 313px;
}
.prop-panel .side-content {
    width: 311px;
}
.section {
    border-bottom: 1px solid #353536;
}
.section-title {
    display: flex;
    align-items: center;
    height: 55px;
    padding: 5px 19px 0 15px;
    gap: 6px;
}
.section-title h2 {
    margin: 0;
    font-size: 14.5px;
    font-weight: 500;
    letter-spacing: -0.55px;
}
.dots {
    margin-left: auto;
}
.add-box {
    display: flex;
    flex-direction: column;
    align-items: center;
    width: 254px;
    height: 100px;
    margin: 0 0 10px 29px;
    padding-top: 24px;
    border: 1px dashed #b5b5b5;
    border-radius: 7px;
    background-color: #2f2e30;
    color: #b0b0b0;
}
.add-box p {
    margin: 12px 0 0;
    letter-spacing: -0.3px;
}
.name-row {
    display: flex;
    align-items: center;
    justify-content: space-between;
    height: 31px;
    margin: 13px 16px 0 14px;
    padding: 2px 0 0 6px;
    border-bottom: 1px solid #6b6b6b;
    color: #a5a5a5;
    font-size: 12.5px;
    letter-spacing: -0.5px;
}
.name-row svg {
    color: #777;
}
.prop-panel .section-title {
    height: 50px;
    padding-top: 11px;
    padding-left: 14px;
    padding-right: 18px;
}
.prop-panel .add-box {
    margin-left: 28px;
}

/* Popup over the left panel */
.popup {
    position: absolute;
    left: 32px;
    top: 41px;
    width: 179px;
    height: 126px;
    padding-top: 9px;
    border: 1px solid #2b2c2c;
    border-radius: 16px;
    background-color: #242625;
    box-shadow: 0 5px 16px rgba(0, 0, 0, 0.4);
}
.popup-search {
    display: flex;
    align-items: center;
    width: 168px;
    height: 34px;
    margin: -1px 0 0 4px;
    padding-left: 5px;
    border: 1px solid #2348e8;
    border-radius: 17px;
    background-color: #121214;
    color: #b5b5b5;
    font-size: 12.5px;
    letter-spacing: -0.6px;
}
.popup-search svg {
    margin-right: 11px;
}
.caret {
    width: 1px;
    height: 16px;
    background-color: #ddd;
}
.popup-group {
    height: 31px;
    margin-top: 10px;
    padding: 9px 8px 0;
    border-top: 1px solid #3f3f40;
    font-size: 16px;
    letter-spacing: -0.5px;
}
.popup-item {
    display: flex;
    align-items: center;
    height: 34px;
    gap: 15px;
    padding-left: 8px;
    background-color: #363638;
    color: #2348e8;
}
.click-spot {
    position: absolute;
    left: 83px;
    top: 123px;
    width: 24px;
    height: 24px;
    border-radius: 50%;
    background-color: #8f9a1c;
}
.cursor {
    position: absolute;
    left: 90px;
    top: 136px;
}
.tooltip {
    position: absolute;
    left: 105px;
    top: 150px;
    width: 317px;
    height: 25px;
    padding-left: 7px;
    border: 1px solid #3a3a3a;
    background-color: #fff;
    color: #444;
    font: 12px/24px "Open Sans", sans-serif;
    letter-spacing: -0.26px;
    white-space: nowrap;
}
```
